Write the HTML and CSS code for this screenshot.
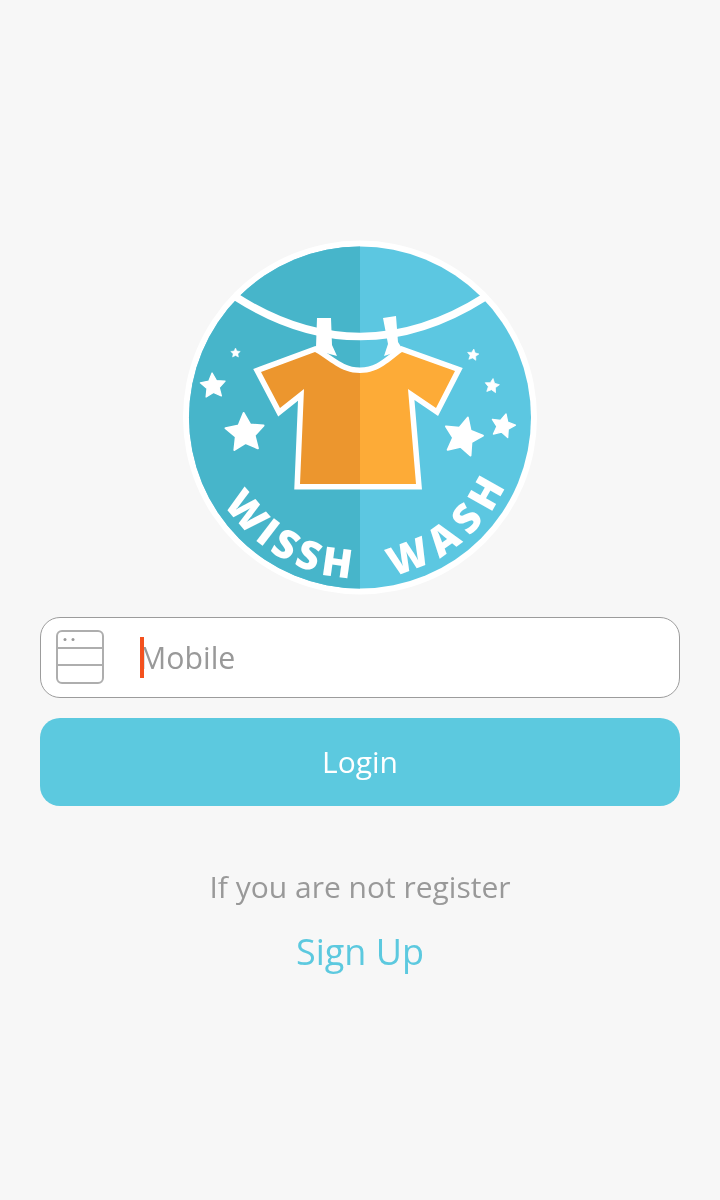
FILE: index.html
```html
<!DOCTYPE html>
<html lang="en">
<head>
<meta charset="utf-8">
<title>Wissh Wash</title>
<link rel="stylesheet" href="styles.css">
</head>
<body>
<main class="screen">
  <svg class="logo" viewBox="180 235 360 360" aria-label="Wissh Wash logo">
    <defs>
      <clipPath id="left-half"><rect x="180" y="235" width="180" height="360"/></clipPath>
      <clipPath id="right-half"><rect x="360" y="235" width="180" height="360"/></clipPath>
      <path id="shirt" d="M261 372 L315 352 C330 360 340 373 360 373 C380 373 390 360 402 352 L455 371 L436 408 L408 389 L416 484 L300 484 L304 389 L280 408 Z"/>
      <path id="star" d="M0 -10 L2.9 -4 L9.51 -3.09 L4.7 1.53 L5.88 8.09 L0 5 L-5.88 8.09 L-4.7 1.53 L-9.51 -3.09 L-2.9 -4 Z"/>
      <path id="arc" d="M199 417.5 A161 161 0 0 0 521 417.5"/>
    </defs>
    <circle class="ring" cx="360" cy="417.5" r="177"/>
    <circle class="disc-right" cx="360" cy="417.5" r="171"/>
    <circle class="disc-left" cx="360" cy="417.5" r="171" clip-path="url(#left-half)"/>
    <path class="line" d="M236 297 Q360 376 485 297"/>
    <path class="pin" d="M317 318 L331 318 L332 345 L337 356 L322 352 L316 347 Z"/>
    <path class="pin" d="M383 318 L396 316 L398 342 L403 350 L384 356 L388 344 Z"/>
    <use href="#shirt" class="shirt-edge"/>
    <use href="#shirt" class="shirt-right" clip-path="url(#right-half)"/>
    <use href="#shirt" class="shirt-left" clip-path="url(#left-half)"/>
    <g class="stars">
      <use href="#star" transform="translate(245 433) rotate(-4) scale(2)"/>
      <use href="#star" transform="translate(213 386) rotate(-4) scale(1.3)"/>
      <use href="#star" transform="translate(235.500 353) scale(.5)"/>
      <use href="#star" transform="translate(473 355) rotate(8) scale(.6)"/>
      <use href="#star" transform="translate(492 386) rotate(8) scale(.75)"/>
      <use href="#star" transform="translate(503 426) rotate(14) scale(1.25)"/>
      <use href="#star" transform="translate(463 437) rotate(14) scale(2)"/>
    </g>
    <text class="brand"><textPath href="#arc" startOffset="33.500%">WISSH</textPath></text>
    <text class="brand brand-wide"><textPath href="#arc" startOffset="72%">WASH</textPath></text>
  </svg>

  <form class="form">
    <label class="field">
      <svg class="field-icon" viewBox="0 0 48 54" aria-hidden="true">
        <rect class="icon-line" x="1" y="1" width="46" height="52" rx="5"/>
        <path class="icon-line" d="M1 18 H47 M1 35 H47"/>
        <circle class="icon-dot" cx="9" cy="9.500" r="1.500"/>
        <circle class="icon-dot" cx="17" cy="9.500" r="1.500"/>
      </svg>
      <input class="field-input" type="text" placeholder="Mobile">
      <span class="caret"></span>
    </label>
    <button class="login" type="button">Login</button>
  </form>

  <p class="hint">If you are not register</p>
  <a class="signup" href="#">Sign Up</a>
</main>
</body>
</html>
```
FILE: styles.css
```css
* { box-sizing: border-box; }

html, body {
  margin: 0;
  height: 100%;
}

body {
  background: #f7f7f7;
  font-family: "Open Sans", "Liberation Sans", sans-serif;
}

.screen {
  display: flex;
  flex-direction: column;
  align-items: center;
  height: 1200px;
  padding: 235px 40px 0;
  will-change: transform;
}

.logo {
  display: block;
  width: 360px;
  height: 360px;
  flex: none;
}

.ring { fill: #fff; }
.disc-right { fill: #5cc7e1; }
.disc-left { fill: #47b5ca; }

.line {
  fill: none;
  stroke: #fff;
  stroke-width: 7.500;
}

.pin { fill: #fff; }

.shirt-edge {
  fill: #fff;
  stroke: #fff;
  stroke-width: 11;
  stroke-linejoin: miter;
  stroke-miterlimit: 6;
}

.shirt-right { fill: #fdab37; }
.shirt-left { fill: #ec962e; }

.stars use {
  fill: #fff;
  stroke: #fff;
  stroke-width: 1;
  stroke-linejoin: round;
}

.brand {
  fill: #fff;
  font-family: "Open Sans", sans-serif;
  font-size: 40px;
  font-weight: 800;
  text-anchor: middle;
  letter-spacing: 5px;
}

.brand-wide { letter-spacing: 8px; }

.form {
  display: flex;
  flex-direction: column;
  gap: 20px;
  width: 100%;
  margin-top: 22px;
}

.field {
  position: relative;
  display: flex;
  align-items: center;
  height: 81px;
  padding-left: 15px;
  background: #fff;
  border: 1px solid #9c9c9c;
  border-radius: 20px;
}

.field-icon {
  display: block;
  width: 48px;
  height: 54px;
  flex: none;
  margin-top: -2px;
}

.icon-line {
  fill: none;
  stroke: #aeaeae;
  stroke-width: 2;
}

.icon-dot { fill: #999; }

.field-input {
  flex: 1;
  min-width: 0;
  height: 100%;
  margin-left: 35px;
  padding: 0;
  border: 0;
  outline: 0;
  background: transparent;
  font-family: inherit;
  font-size: 30.300px;
  color: #444;
}

.field-input::placeholder {
  color: #999;
  opacity: 1;
}

.caret {
  position: absolute;
  left: 99px;
  top: 19px;
  width: 4px;
  height: 41px;
  background: #f4511e;
}

.login {
  display: block;
  width: 100%;
  height: 88px;
  padding: 0 0 2px;
  border: 0;
  border-radius: 20px;
  background: #5cc9df;
  color: #fff;
  font-family: inherit;
  font-size: 30px;
}

.hint {
  margin: 60px 0 0;
  font-size: 30px;
  line-height: 42px;
  color: #999;
}

.signup {
  margin-top: 19px;
  font-size: 36px;
  line-height: 50px;
  color: #5cc9df;
  text-decoration: none;
}
```
